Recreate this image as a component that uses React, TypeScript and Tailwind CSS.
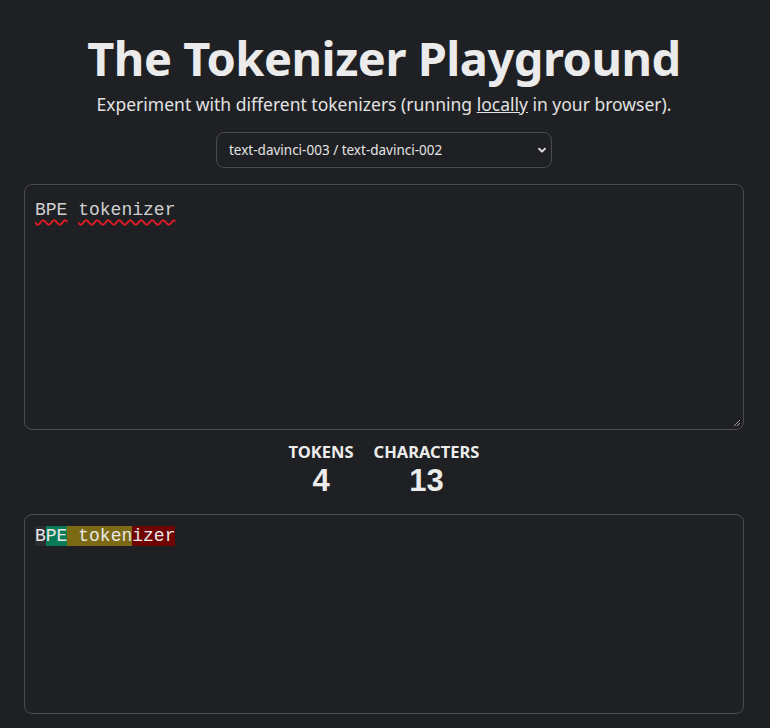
import React from "react";

const tokens = [
  { t: "B", c: "bg-[#2c2d31]" },
  { t: "PE", c: "bg-[#087a55]" },
  { t: " token", c: "bg-[#7b6913]" },
  { t: "izer", c: "bg-[#700404]" },
];

const numFont = { fontFamily: '"Liberation Sans", Arial, sans-serif' };

export default function App() {
  return (
    <div className="min-h-[728px] bg-[#1f2023] text-[#ececec] pl-6 pr-[26px] pt-[29px] pb-[14px] flex flex-col items-center" style={{ fontFamily: '"Noto Sans", "Open Sans", sans-serif' }}>
      <h1 className="text-[47px] leading-[58px] font-bold tracking-[-0.5px] text-[#ebebeb]">The Tokenizer Playground</h1>
      <p className="text-[17.5px] leading-[24px] mt-[5px] text-[#e2e2e2]">
        Experiment with different tokenizers (running <a className="underline">locally</a> in your browser).
      </p>
      <div className="mt-[16px] relative w-[336px] h-[36px]">
        <div className="w-full h-full rounded-[8px] border border-[#4a4b4e] bg-[#1f2023] flex items-center pl-[12px] pr-[4px] text-[13.5px] text-[#e4e4e4]">
          <span className="flex-1">text-davinci-003 / text-davinci-002</span>
          <svg width="10" height="10" viewBox="0 0 24 24" fill="none" stroke="#e0e0e0" strokeWidth="4.5" strokeLinecap="round" strokeLinejoin="round"><path d="M5 9l7 7 7-7" /></svg>
        </div>
      </div>
      <div className="mt-[16px] w-full h-[246px] rounded-[8px] border border-[#4a4b4e] bg-[#1f2023] relative px-[10px] py-[12px]">
        <div className="text-[18px] leading-[26px] text-[#d0d0d0]" style={{ fontFamily: '"Liberation Mono", "DejaVu Sans Mono", monospace' }}>
          <span className="underline decoration-wavy decoration-[#e01b24] underline-offset-[4px] decoration-[1.5px]">BPE</span>{" "}
          <span className="underline decoration-wavy decoration-[#e01b24] underline-offset-[4px] decoration-[1.5px]">tokenizer</span>
        </div>
        <svg className="absolute right-[2px] bottom-[2px]" width="10" height="10" viewBox="0 0 10 10">
          <path d="M9 3L3 9M9 6L6 9" stroke="#9a9a9a" strokeWidth="1" />
        </svg>
      </div>
      <div className="mt-[12px] flex gap-[20px] justify-center">
        <div className="flex flex-col items-center">
          <span className="text-[16.5px] leading-[20px] font-bold">TOKENS</span>
          <span className="text-[31px] leading-[38px] font-bold" style={numFont}>4</span>
        </div>
        <div className="flex flex-col items-center">
          <span className="text-[16.5px] leading-[20px] font-bold">CHARACTERS</span>
          <span className="text-[31px] leading-[38px] font-bold" style={numFont}>13</span>
        </div>
      </div>
      <div className="mt-[14px] w-full h-[200px] rounded-[8px] border border-[#4a4b4e] px-[10px] py-[8px]">
        <div className="text-[18px] leading-[26px] text-[#e8e8e8] whitespace-pre" style={{ fontFamily: '"Liberation Mono", "DejaVu Sans Mono", monospace' }}>
          {tokens.map((k, i) => (
            <span key={i} className={k.c}>{k.t}</span>
          ))}
        </div>
      </div>
    </div>
  );
}
